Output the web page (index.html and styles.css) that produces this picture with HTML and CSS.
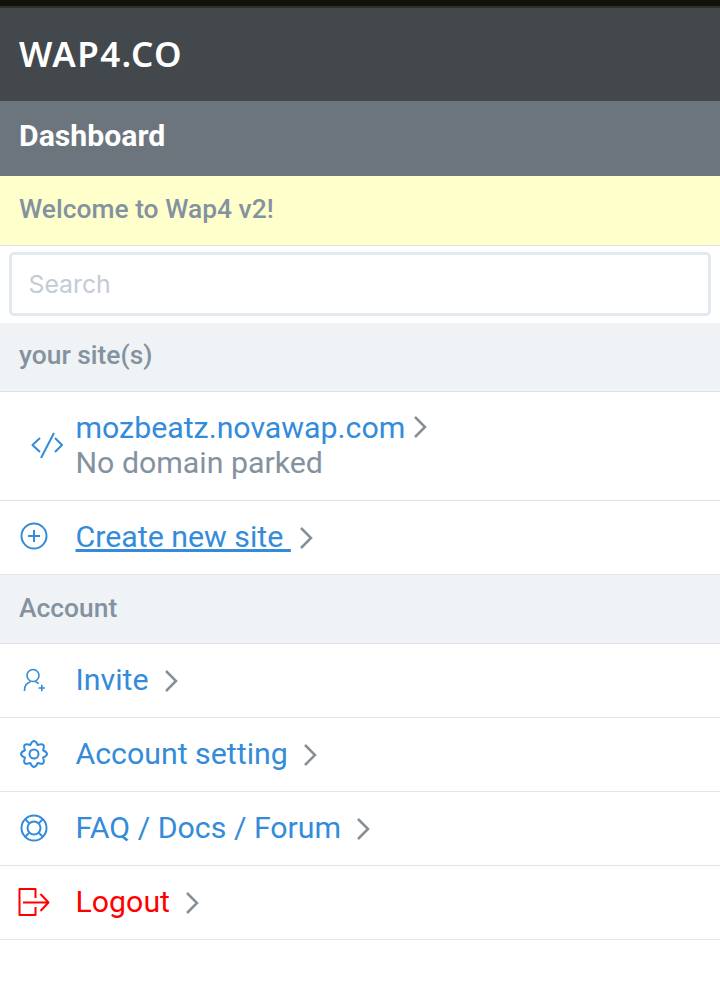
FILE: index.html
```html
<!DOCTYPE html>
<html>
<head>
  <title>Wap4 Dashboard</title>
  <link rel="stylesheet" href="styles.css">
</head>
<body>

  <div class="topline"></div>

  <div class="logo-bar">
    <span class="logo">WAP4.CO</span>
  </div>

  <div class="page-title">Dashboard</div>

  <div class="notice">Welcome to Wap4 v2!</div>

  <div class="search-box">
    <input class="search" type="text" placeholder="Search">
  </div>

  <div class="section-head section-sites">your site(s)</div>

  <div class="row row-site">
    <svg class="icon icon-code" width="32" height="32" viewBox="0 0 32 32">
      <path d="M9 8 1.500 15 9 22M24 8l7 7-7 7M23 3 10 28"/>
    </svg>
    <div class="site-info">
      <div class="site-line">
        <a class="link" href="#">mozbeatz.novawap.com</a>
        <svg class="chevron" width="14" height="22" viewBox="0 0 14 22"><path d="M2 1l10 10L2 21"/></svg>
      </div>
      <div class="site-sub">No domain parked</div>
    </div>
  </div>

  <div class="row row-pink">
    <svg class="icon icon-plus" width="28" height="28" viewBox="0 0 28 28">
      <circle cx="14" cy="14" r="12.500"/>
      <path d="M14 8v12M8 14h12"/>
    </svg>
    <a class="link underlined" href="#">Create new site&nbsp;</a>
    <svg class="chevron" width="14" height="22" viewBox="0 0 14 22"><path d="M2 1l10 10L2 21"/></svg>
  </div>

  <div class="section-head">Account</div>

  <div class="row">
    <svg class="icon icon-thin" width="28" height="28" viewBox="0 0 28 28">
      <circle cx="13" cy="9.500" r="6"/>
      <path d="M4.500 25v-1c0-4 2.500-7 6-8.200M15.500 15.800c1.200.4 2.200 1 3 1.800M18.500 22h6.500M21.800 18.800v6.500"/>
    </svg>
    <a class="link" href="#">Invite</a>
    <svg class="chevron" width="14" height="22" viewBox="0 0 14 22"><path d="M2 1l10 10L2 21"/></svg>
  </div>

  <div class="row">
    <svg class="icon" width="28" height="28" viewBox="0 0 28 28">
      <circle cx="14" cy="14" r="4.500"/>
      <path d="M23.050 10.250Q31 14 23.050 17.750 26.020 26.020 17.750 23.050 14 31 10.250 23.050 1.980 26.020 4.950 17.750-3 14 4.950 10.250 1.980 1.980 10.250 4.950 14-3 17.750 4.950 26.020 1.980 23.050 10.250Z"/>
    </svg>
    <a class="link" href="#">Account setting</a>
    <svg class="chevron" width="14" height="22" viewBox="0 0 14 22"><path d="M2 1l10 10L2 21"/></svg>
  </div>

  <div class="row">
    <svg class="icon" width="28" height="28" viewBox="0 0 28 28">
      <circle cx="14" cy="14" r="12.500"/>
      <circle cx="14" cy="14" r="6.500"/>
      <path d="M5.200 5.200l4.400 4.400M22.800 5.200l-4.400 4.400M5.200 22.800l4.400-4.400M22.800 22.800l-4.400-4.400"/>
    </svg>
    <a class="link" href="#">FAQ / Docs / Forum</a>
    <svg class="chevron" width="14" height="22" viewBox="0 0 14 22"><path d="M2 1l10 10L2 21"/></svg>
  </div>

  <div class="row">
    <svg class="icon icon-logout" width="32" height="28" viewBox="0 0 32 28">
      <path d="M17.500 10V1H1.500v26h16v-8M5 14.500h25.500M22.500 6l8 8.500-8 8.500"/>
    </svg>
    <a class="link link-red" href="#">Logout</a>
    <svg class="chevron" width="14" height="22" viewBox="0 0 14 22"><path d="M2 1l10 10L2 21"/></svg>
  </div>

</body>
</html>
```

FILE: styles.css
```css
body {
  font-family: "Roboto", sans-serif;
  margin: 0;
  background-color: #fff;
  color: #8492a0;
}

.topline {
  height: 6px;
  background-color: #12120a;
  border-bottom: 2px solid #302f25;
}

.logo-bar {
  height: 93px;
  box-sizing: border-box;
  display: flex;
  align-items: center;
  padding-left: 19px;
  padding-bottom: 3px;
  background-color: #43484c;
}

.logo {
  font-family: "Noto Sans", sans-serif;
  font-size: 35px;
  font-weight: 600;
  letter-spacing: 1.400px;
  color: #fff;
}

.page-title {
  height: 75px;
  line-height: 70px;
  padding-left: 19px;
  font-size: 30.240px;
  font-weight: 700;
  color: #fff;
  background-color: #6c757d;
}

.notice {
  height: 69px;
  line-height: 67px;
  padding-left: 19px;
  font-size: 26.400px;
  font-weight: 500;
  background-color: #ffc;
  border-bottom: 1px solid #dee2e6;
}

.search-box {
  height: 77px;
  box-sizing: border-box;
  padding: 6px 9px 7px 9px;
}

.search {
  display: block;
  width: 100%;
  height: 64px;
  box-sizing: border-box;
  padding: 0 16.500px;
  font-family: "Inter", sans-serif;
  font-size: 24.800px;
  border: 3px solid #e3e9f0;
  border-radius: 5px;
  outline: none;
}

.search::placeholder {
  color: #c3ccd6;
}

.section-head {
  height: 68px;
  line-height: 67px;
  padding-left: 19px;
  font-size: 26.400px;
  font-weight: 500;
  background-color: #eff3f6;
  border-bottom: 1px solid #dee2e6;
}

.section-sites {
  line-height: 65px;
}

.row {
  height: 73px;
  display: flex;
  align-items: center;
  border-bottom: 1px solid #e4e4e8;
  padding-left: 75.500px;
  position: relative;
}

.row-site {
  height: 108px;
  border-bottom-color: #eadfe3;
}

.row-pink {
  border-bottom-color: #f0dede;
}

.icon {
  position: absolute;
  left: 20px;
  top: 22px;
  fill: none;
  stroke: #338bd9;
  stroke-width: 2;
  stroke-linejoin: round;
}

.icon-code {
  left: 31px;
  top: 38px;
}

.icon-plus {
  top: 21px;
}

.icon-thin {
  stroke-width: 1.600;
}

.icon-logout {
  left: 18px;
  stroke: #f00;
}

.link {
  font-size: 30.300px;
  line-height: 36px;
  margin-top: -2px;
  color: #338bd9;
  text-decoration: none;
}

.underlined {
  text-decoration: underline;
}

.link-red {
  color: #f00;
}

.chevron {
  margin-left: 15px;
  fill: none;
  stroke: #868e96;
  stroke-width: 2.500;
  flex-shrink: 0;
}

.site-line .chevron,
.row-pink .chevron {
  margin-left: 8px;
}

.site-info {
  display: flex;
  flex-direction: column;
  margin-top: -2px;
}

.site-line {
  display: flex;
  align-items: center;
  height: 36px;
}

.site-line .link {
  margin-top: 2px;
}

.site-sub {
  font-size: 30.300px;
  line-height: 36px;
}
```
